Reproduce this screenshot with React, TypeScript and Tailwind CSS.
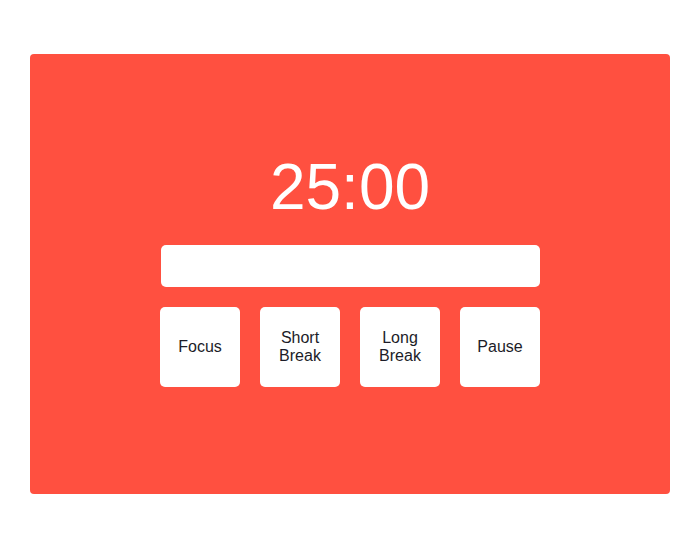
export default function App() {
  const modes = ["Focus", "Short Break", "Long Break", "Pause"];
  return (
    <div className="min-h-[554px] bg-white pl-[30px] pt-[54px] font-['Liberation_Sans',Arial,sans-serif]">
      <div className="flex h-[440px] w-[640px] flex-col items-center rounded bg-[#ff5040] pt-[96px]">
        <div className="text-[64px] leading-[74px] text-white">25:00</div>
        <div className="mt-[21px] ml-px h-[42px] w-[379px] rounded-[5px] bg-white" />
        <div className="mt-5 flex gap-5">
          {modes.map((m) => (
            <button
              key={m}
              type="button"
              className="flex h-20 w-20 items-center justify-center rounded-[5px] bg-white px-3 text-center text-base leading-[18px] text-[#1c1c28]"
            >
              {m}
            </button>
          ))}
        </div>
      </div>
    </div>
  );
}
